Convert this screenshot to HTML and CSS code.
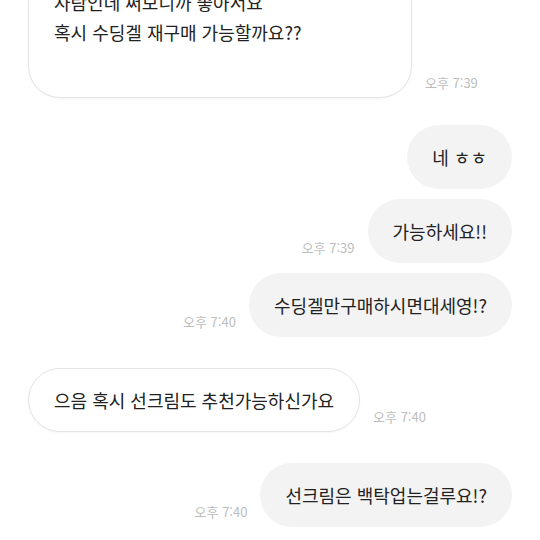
FILE: index.html
```html
<!DOCTYPE html>
<html lang="ko">
<head>
  <meta charset="UTF-8">
  <title>채팅</title>
  <link rel="stylesheet" href="styles.css">
</head>
<body>

<div class="chat">
  <!-- 상대방 -->
  <div class="row in">
    <div class="bubble bubble-long">사람인데 써보니까 좋아서요<br>혹시 수딩겔 재구매 가능할까요??<br>&nbsp;</div>
    <span class="time">오후 7:39</span>
  </div>

  <!-- 나 -->
  <div class="row out group-start after-long">
    <div class="bubble">네 ㅎㅎ</div>
  </div>
  <div class="row out">
    <span class="time">오후 7:39</span>
    <div class="bubble">가능하세요!!</div>
  </div>
  <div class="row out">
    <span class="time">오후 7:40</span>
    <div class="bubble">수딩겔만구매하시면대세영!?</div>
  </div>

  <div class="row in group-start">
    <div class="bubble">으음 혹시 선크림도 추천가능하신가요</div>
    <span class="time">오후 7:40</span>
  </div>

  <div class="row out group-start">
    <span class="time">오후 7:40</span>
    <div class="bubble">선크림은 백탁업는걸루요!?</div>
  </div>
</div>

</body>
</html>
```

FILE: styles.css
```css
* {
  box-sizing: border-box;
}
body {
  margin: 0;
  background-color: #fff;
  font-family: "Noto Sans CJK KR", "Noto Sans", sans-serif;
  color: #222;
  overflow: hidden;
}
.chat {
  display: flex;
  flex-direction: column;
  padding: 0 28px;
  margin-top: -40px;
}
.row {
  display: flex;
  align-items: flex-end;
  gap: 13px;
  margin-top: 10px;
}
.row.group-start {
  margin-top: 31px;
}
.row.group-start.after-long {
  margin-top: 27px;
}
.row.in {
  justify-content: flex-start;
}
.row.out {
  justify-content: flex-end;
}
.bubble {
  font-size: 18px;
  line-height: 30px;
  padding: 17px 25px;
  border-radius: 32px;
  white-space: nowrap;
}
.row.in .bubble {
  background-color: #fff;
  border: 1px solid #e4e4e4;
  box-shadow: 0 1px 2px rgba(0,0,0,0.04);
  padding: 16px 25px;
}
.row.in .bubble-long {
  width: 384px;
  padding-bottom: 20px;
}
.row.out .bubble {
  background-color: #f3f3f3;
}
.time {
  font-size: 13px;
  color: #bdbdbd;
  margin-bottom: 6px;
  white-space: nowrap;
}
```
